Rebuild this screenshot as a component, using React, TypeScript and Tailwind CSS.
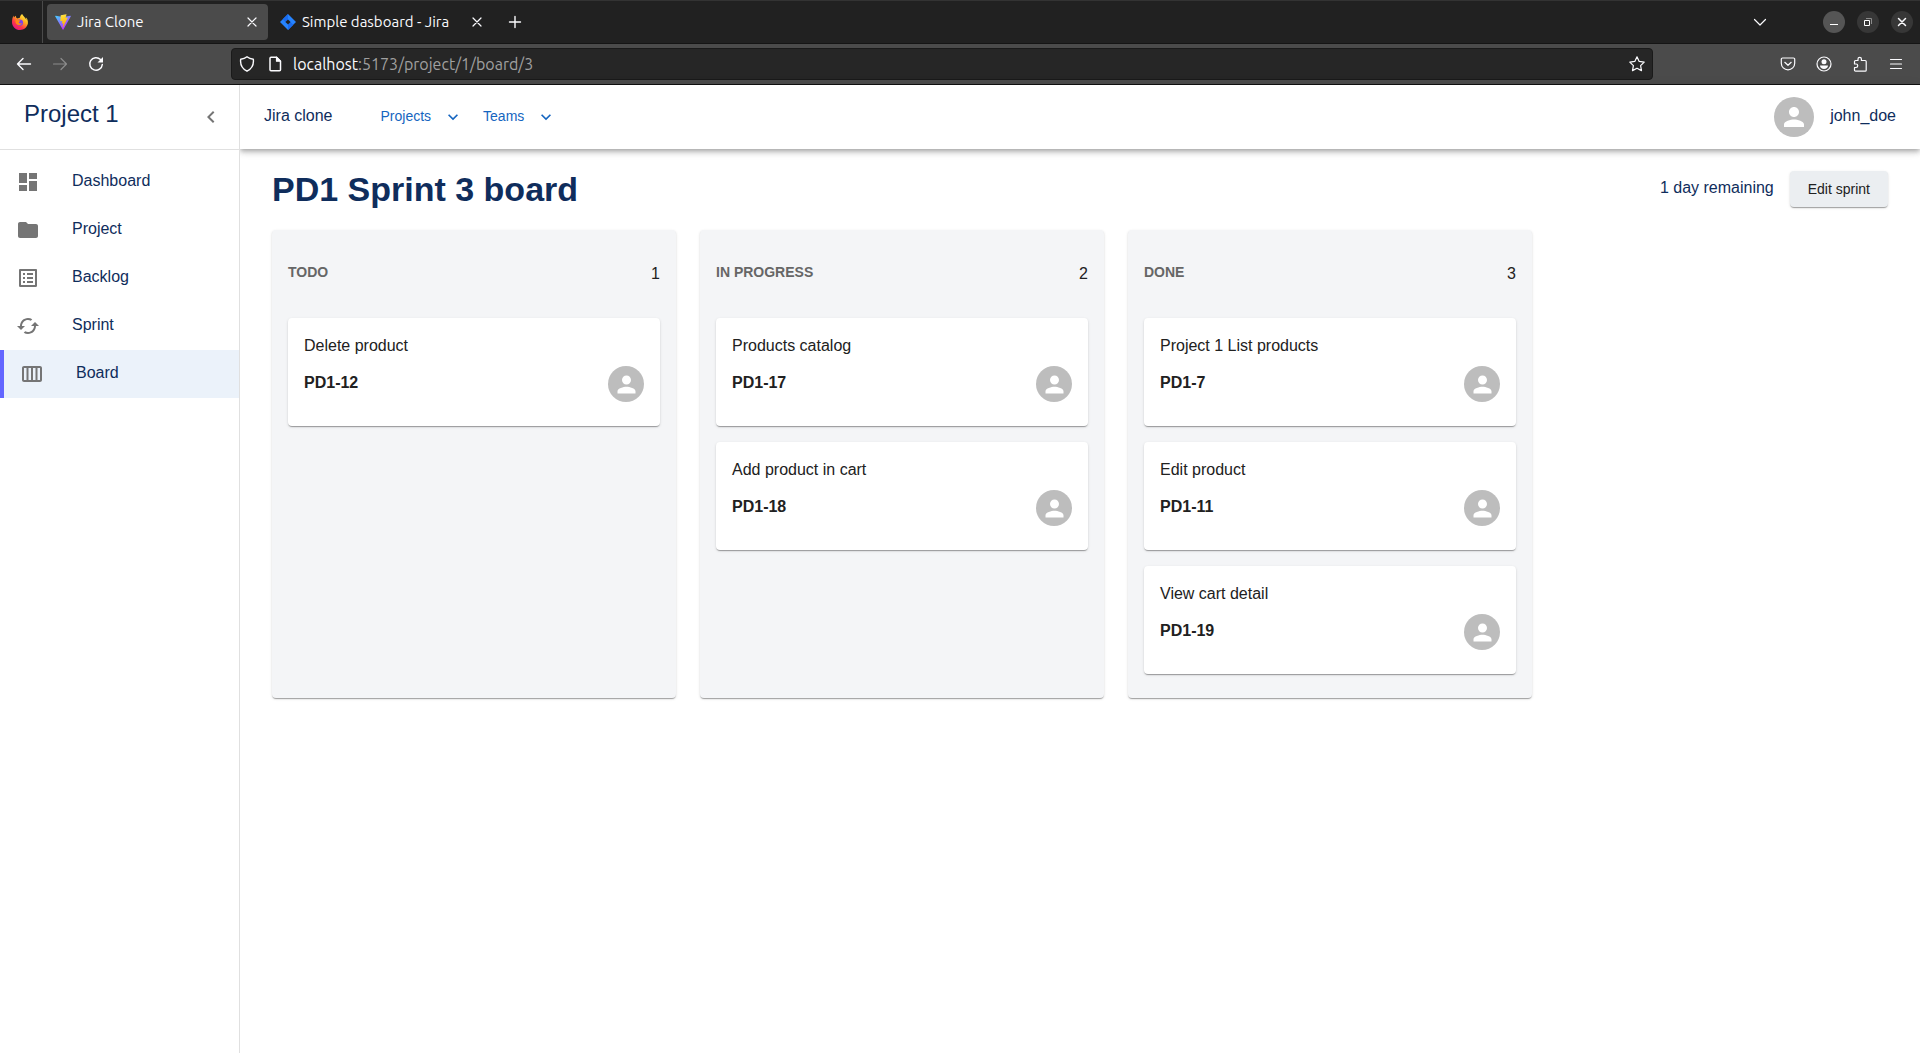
import React from "react";
import {
  MdCached,
  MdCalendarViewWeek,
  MdChevronLeft,
  MdDashboard,
  MdExpandMore,
  MdFolder,
  MdListAlt,
  MdPerson,
} from "react-icons/md";

type Card = { title: string; code: string };
type Column = { name: string; cards: Card[] };

const columns: Column[] = [
  { name: "TODO", cards: [{ title: "Delete product", code: "PD1-12" }] },
  {
    name: "IN PROGRESS",
    cards: [
      { title: "Products catalog", code: "PD1-17" },
      { title: "Add product in cart", code: "PD1-18" },
    ],
  },
  {
    name: "DONE",
    cards: [
      { title: "Project 1 List products", code: "PD1-7" },
      { title: "Edit product", code: "PD1-11" },
      { title: "View cart detail", code: "PD1-19" },
    ],
  },
];

const links = [
  { label: "Dashboard", Icon: MdDashboard, active: false },
  { label: "Project", Icon: MdFolder, active: false },
  { label: "Backlog", Icon: MdListAlt, active: false },
  { label: "Sprint", Icon: MdCached, active: false },
  { label: "Board", Icon: MdCalendarViewWeek, active: true },
];

const paper =
  "rounded shadow-[0px_2px_1px_-1px_rgba(0,0,0,0.2),0px_1px_1px_0px_rgba(0,0,0,0.14),0px_1px_3px_0px_rgba(0,0,0,0.12)]";

function Stroke({ children }: { children: React.ReactNode }) {
  return (
    <svg
      viewBox="0 0 16 16"
      className="size-4"
      fill="none"
      stroke="currentColor"
      strokeWidth="1.2"
      strokeLinecap="round"
      strokeLinejoin="round"
      aria-hidden="true"
    >
      {children}
    </svg>
  );
}

function FirefoxLogo() {
  return (
    <svg viewBox="0 0 16 16" className="size-4" aria-hidden="true">
      <defs>
        <linearGradient id="ff-body" x1="0.85" y1="0.05" x2="0.2" y2="0.95">
          <stop offset="0" stopColor="#fff44f" />
          <stop offset="0.35" stopColor="#ffb01e" />
          <stop offset="0.7" stopColor="#ff3647" />
          <stop offset="1" stopColor="#e31587" />
        </linearGradient>
      </defs>
      <path
        d="M15.4 5.6c-.4-.9-1.1-1.7-1.7-2 .5 1 .7 1.9.8 2.5C13.7 3.8 12 2.9 10.7 .9L10.2 0C8.6.9 8 2.7 7.9 3.7c-.8 0-1.6.3-2.2.7L4.1 3.5 3.9 1.8C3.1 2.2 2.5 3 2 3.6c-.3-.5-.3-1.6-.2-2C.6 2.8 0 5.6 0 8.2 0 12.5 3.6 16 8 16c3.9 0 7.2-2.8 7.9-6.5.1-1.3 0-2.7-.5-3.9z"
        fill="url(#ff-body)"
      />
      <circle cx="7.8" cy="8.6" r="3.2" fill="#7b3ff2" />
      <path
        d="M3.6 6c1.2-.8 2.6-.4 3.3.2l1.6.3c-.2 1-1.6 1.1-1.8 2 .5 1 2 1.3 3.2.5-.5 2-3 2.9-4.9 1.6C3.6 9.5 3 7.5 3.6 6z"
        fill="#ff8a16"
      />
    </svg>
  );
}

function ViteLogo() {
  return (
    <svg viewBox="0 0 32 32" className="size-4" aria-hidden="true">
      <defs>
        <linearGradient id="vite-a" x1="0" y1="0" x2="0.6" y2="0.9">
          <stop offset="0" stopColor="#41d1ff" />
          <stop offset="1" stopColor="#bd34fe" />
        </linearGradient>
        <linearGradient id="vite-b" x1="0.4" y1="0" x2="0.6" y2="1">
          <stop offset="0" stopColor="#ffea83" />
          <stop offset="0.1" stopColor="#ffdd35" />
          <stop offset="1" stopColor="#ffa800" />
        </linearGradient>
      </defs>
      <path
        d="M31.5 4.8 16.8 31a.8.8 0 0 1-1.4 0L.5 4.8A.8.8 0 0 1 1.3 3.6L16 6.2l14.7-2.6a.8.8 0 0 1 .8 1.2z"
        fill="url(#vite-a)"
      />
      <path
        d="M22.5.3 11.7 2.4a.4.4 0 0 0-.3.4l-.7 11.3a.4.4 0 0 0 .5.4l3-.7a.4.4 0 0 1 .5.5l-.9 4.4a.4.4 0 0 0 .5.5l1.9-.6a.4.4 0 0 1 .5.5l-1.4 6.9c-.1.4.5.7.7.3l9.3-18.5a.4.4 0 0 0-.4-.6l-3.3.6a.4.4 0 0 1-.4-.5L23 .8a.4.4 0 0 0-.5-.5z"
        fill="url(#vite-b)"
      />
    </svg>
  );
}

function JiraLogo() {
  return (
    <svg viewBox="0 0 16 16" className="size-4" aria-hidden="true">
      <path d="M8 0l8 8-8 8-8-8z" fill="#2684ff" />
      <path d="M8 0v5.4L5.4 8 2.7 5.3z" fill="#1a6cf0" />
      <path d="M8 16v-5.4L10.6 8l2.7 2.7z" fill="#1a6cf0" />
      <path d="M8 5.4 10.6 8 8 10.6 5.4 8z" fill="#212121" />
    </svg>
  );
}

function Tab({ title, logo, active }: { title: string; logo: React.ReactNode; active?: boolean }) {
  return (
    <div className={`ml-1 flex h-9 w-[221px] items-center rounded px-2 ${active ? "bg-[#4b4b4b]" : ""}`}>
      {logo}
      <span className="ml-1.5 flex-1 text-[15px]">{title}</span>
      <button aria-label={`Close ${title}`}>
        <Stroke>
          <path d="M4 4l8 8M12 4l-8 8" />
        </Stroke>
      </button>
    </div>
  );
}

function BrowserChrome() {
  return (
    <div className="font-['Ubuntu','Noto_Sans',sans-serif] text-[#fbfbfe]">
      <div className="flex h-11 items-center border-t border-b border-t-[#333333] border-b-[#151515] bg-[#212121]">
        <div className="flex h-full w-[43px] shrink-0 items-center justify-center border-r border-[#4a4a4a] pr-0.5">
          <FirefoxLogo />
        </div>
        <Tab title="Jira Clone" logo={<ViteLogo />} active />
        <Tab title="Simple dasboard - Jira" logo={<JiraLogo />} />
        <button className="ml-3.5" aria-label="New tab">
          <Stroke>
            <path d="M8 2.5v11M2.5 8h11" strokeWidth="1.4" />
          </Stroke>
        </button>
        <button className="mr-[55px] ml-auto" aria-label="List all tabs">
          <Stroke>
            <path d="M2.5 5.5 8 11l5.5-5.5" />
          </Stroke>
        </button>
        <div className="flex gap-3 pr-[7px]">
          <button aria-label="Minimize" className="flex size-[22px] items-center justify-center rounded-full bg-[#555555]">
            <svg viewBox="0 0 16 16" className="size-4" aria-hidden="true">
              <path d="M4 10h8v1H4z" fill="#fff" />
            </svg>
          </button>
          <button aria-label="Restore" className="flex size-[22px] items-center justify-center rounded-full bg-[#373737]">
            <svg viewBox="0 0 16 16" className="size-4" fill="none" aria-hidden="true">
              <path d="M6 4.5h5.5V10" stroke="#8b8b8b" />
              <path d="M4.5 6.5h5v5h-5z" stroke="#fff" />
            </svg>
          </button>
          <button aria-label="Close window" className="flex size-[22px] items-center justify-center rounded-full bg-[#373737]">
            <Stroke>
              <path d="M4.5 4.5l7 7M11.5 4.5l-7 7" strokeWidth="1.5" />
            </Stroke>
          </button>
        </div>
      </div>
      <div className="flex h-[41px] items-center border-b border-[#111111] bg-[#4b4b4b] px-4">
        <button aria-label="Back">
          <Stroke>
            <path d="M14.5 8h-13M7 2.5 1.5 8 7 13.5" strokeWidth="1.4" />
          </Stroke>
        </button>
        <button aria-label="Forward" className="ml-5 text-[#8c8c8c]" disabled>
          <Stroke>
            <path d="M1.5 8h13M9 2.5 14.5 8 9 13.5" />
          </Stroke>
        </button>
        <button aria-label="Reload" className="ml-5">
          <Stroke>
            <path d="M12.5 3.5A6.3 6.3 0 1 0 14.3 8.5" strokeWidth="1.5" />
            <path d="M15 1v5.5H9.5z" fill="currentColor" stroke="none" />
          </Stroke>
        </button>
        <div className="mx-[127px] flex h-8 flex-1 items-center gap-3 rounded border border-[#1a1a1a] bg-[#262626] px-[7px]">
          <Stroke>
            <path
              d="M8 .8C6.5 2 4.3 2.9 1.7 3.2 1 8.5 3.5 12.8 8 15.2c4.5-2.4 7-6.7 6.3-12C11.7 2.9 9.5 2 8 .8z"
              strokeWidth="1.4"
            />
          </Stroke>
          <Stroke>
            <path d="M4 1.2h5.5l4 4v8.5a1 1 0 0 1-1 1H4a1 1 0 0 1-1-1V2.2a1 1 0 0 1 1-1z" strokeWidth="1.5" />
            <path d="M9.5 1.2v4h4z" fill="currentColor" />
          </Stroke>
          <div className="-ml-0.5 flex-1 text-base">
            localhost<span className="text-[#a0a0a0]">:5173/project/1/board/3</span>
          </div>
          <button aria-label="Bookmark this page">
            <Stroke>
              <path d="M8 .8l2.2 4.6 5 .7-3.6 3.5.9 5L8 12.2l-4.5 2.4.9-5L.8 6.1l5-.7z" />
            </Stroke>
          </button>
        </div>
        <div className="flex gap-5">
          <button aria-label="Save to Pocket">
            <Stroke>
              <path d="M2.5 2h11a1.2 1.2 0 0 1 1.2 1.2v4a6.7 6.7 0 0 1-13.4 0v-4A1.2 1.2 0 0 1 2.5 2z" />
              <path d="M4.8 6.3 8 9.3l3.2-3" />
            </Stroke>
          </button>
          <button aria-label="Account">
            <Stroke>
              <circle cx="8" cy="8" r="7" />
              <circle cx="8" cy="5.8" r="2.5" fill="currentColor" stroke="none" />
              <path d="M4 9.5h8c0 2.3-1.8 3.5-4 3.5s-4-1.2-4-3.5z" fill="currentColor" stroke="none" />
            </Stroke>
          </button>
          <button aria-label="Extensions">
            <Stroke>
              <path d="M6 4.5V3a1.7 1.7 0 0 1 3.4 0v1.5h3.8a1 1 0 0 1 1 1v8.7a1 1 0 0 1-1 1H3.5a1 1 0 0 1-1-1v-2.7H4A1.7 1.7 0 0 0 4 8H2.5V5.5a1 1 0 0 1 1-1z" />
            </Stroke>
          </button>
          <button aria-label="Open application menu">
            <Stroke>
              <path d="M2.5 3.5h11M2.5 8h11M2.5 12.5h11" />
            </Stroke>
          </button>
        </div>
      </div>
    </div>
  );
}

function Avatar({ large }: { large?: boolean }) {
  return (
    <div
      className={`flex shrink-0 items-center justify-center rounded-full bg-[#bdbdbd] text-white ${large ? "size-10" : "size-9"}`}
    >
      <MdPerson className="size-3/4" aria-hidden="true" />
    </div>
  );
}

function Sidebar() {
  return (
    <aside className="z-10 flex w-60 shrink-0 flex-col border-r border-[#e0e0e0] bg-white">
      <div className="flex h-[65px] items-center justify-between border-b border-[#e0e0e0] pr-4 pl-6">
        <span className="pb-1.5 text-2xl">Project 1</span>
        <button aria-label="Collapse sidebar" className="text-[#757575]">
          <MdChevronLeft className="size-6" />
        </button>
      </div>
      <nav className="flex flex-col pt-2">
        {links.map(({ label, Icon, active }) => (
          <a
            key={label}
            href="#"
            className={`flex h-12 items-center gap-8 px-4 ${active ? "border-l-4 border-[#6366ff] bg-[#ebf2fa]" : ""}`}
          >
            <Icon className="size-6 text-[#757575]" aria-hidden="true" />
            <span className="pb-0.5">{label}</span>
          </a>
        ))}
      </nav>
    </aside>
  );
}

function Header() {
  return (
    <header className="flex h-16 items-center bg-white px-6 shadow-[0px_2px_4px_-1px_rgba(0,0,0,0.2),0px_4px_5px_0px_rgba(0,0,0,0.14),0px_1px_10px_0px_rgba(0,0,0,0.12)]">
      <span className="pb-0.5">Jira clone</span>
      <nav className="ml-12 flex gap-5 text-sm text-[#1565c0]">
        {["Projects", "Teams"].map((label) => (
          <button key={label} className="flex items-center gap-3">
            <span className="pb-0.5">{label}</span>
            <MdExpandMore className="size-5" aria-hidden="true" />
          </button>
        ))}
      </nav>
      <div className="ml-auto flex items-center gap-4">
        <Avatar large />
        <span className="pb-0.5">john_doe</span>
      </div>
    </header>
  );
}

function BoardColumn({ name, cards }: Column) {
  return (
    <section className={`${paper} bg-[#f4f5f7] px-4 pt-4 pb-6 text-[#212121]`}>
      <div className="mb-4 flex items-center justify-between py-4">
        <h2 className="pb-1 text-sm font-bold text-[#666666]">{name}</h2>
        <span>{cards.length}</span>
      </div>
      <div className="flex flex-col gap-4">
        {cards.map((card) => (
          <article key={card.code} className={`${paper} bg-white px-4 pt-4 pb-6`}>
            <p>{card.title}</p>
            <div className="mt-2 flex items-center justify-between">
              <span className="pb-0.5 font-bold">{card.code}</span>
              <Avatar />
            </div>
          </article>
        ))}
      </div>
    </section>
  );
}

export default function App() {
  return (
    <div className="flex min-h-screen flex-col bg-white font-['Liberation_Sans',Arial,sans-serif] text-base text-[#0f2d5c]">
      <BrowserChrome />
      <div className="flex flex-1">
        <Sidebar />
        <div className="flex min-w-0 flex-1 flex-col">
          <Header />
          <main className="px-8 pt-5">
            <div className="mb-[21px] flex items-center">
              <h1 className="text-[34px] leading-10 font-bold">PD1 Sprint 3 board</h1>
              <span className="ml-auto pb-0.5">1 day remaining</span>
              <button className={`${paper} ml-4 h-9 bg-[#ebeef1] px-[18px] text-sm text-[#212121]`}>
                Edit sprint
              </button>
            </div>
            <div className="grid max-w-[1260px] grid-cols-3 gap-6">
              {columns.map((column) => (
                <BoardColumn key={column.name} {...column} />
              ))}
            </div>
          </main>
        </div>
      </div>
    </div>
  );
}
